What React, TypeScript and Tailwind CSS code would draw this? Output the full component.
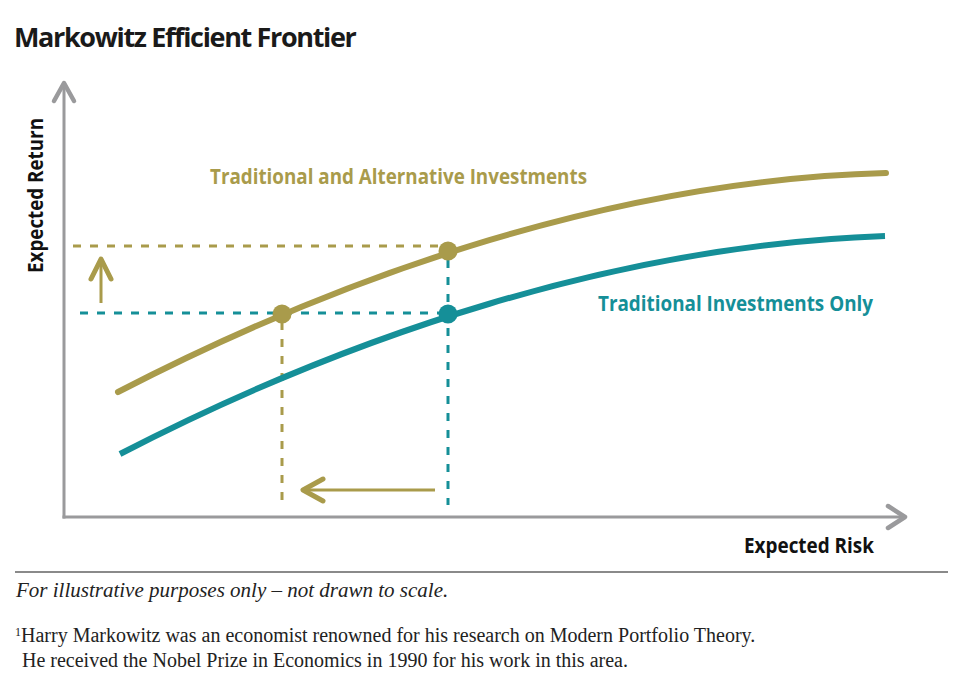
const GOLD = "#a99b4b";
const TEAL = "#158f98";
const AXIS = "#9a9a9c";

function FrontierChart() {
  const sans = "'Open Sans', 'Liberation Sans', sans-serif";
  return (
    <svg width="960" height="511" viewBox="0 54 960 511" className="block">
      {/* axes */}
      <line x1="64" y1="84" x2="64" y2="518.5" stroke={AXIS} strokeWidth="3" />
      <polyline points="54,101 64,83 74,101" fill="none" stroke={AXIS} strokeWidth="4.5" strokeLinecap="round" strokeLinejoin="round" />
      <line x1="62.5" y1="517" x2="904" y2="517" stroke={AXIS} strokeWidth="3" />
      <polyline points="888,506 905,517 888,528" fill="none" stroke={AXIS} strokeWidth="4.5" strokeLinecap="round" strokeLinejoin="round" />

      {/* guide lines */}
      <line x1="73" y1="246" x2="448" y2="246" stroke={GOLD} strokeWidth="3" strokeDasharray="8 9" />
      <line x1="80" y1="313" x2="448" y2="313" stroke={TEAL} strokeWidth="3" strokeDasharray="8 9" />
      <line x1="282" y1="322" x2="282" y2="505" stroke={GOLD} strokeWidth="3" strokeDasharray="8 9" />
      <line x1="448" y1="260" x2="448" y2="505" stroke={TEAL} strokeWidth="3" strokeDasharray="8 9" />

      {/* shift arrows */}
      <line x1="101" y1="303" x2="101" y2="260" stroke={GOLD} strokeWidth="3" />
      <polyline points="91,279 101,259 111,279" fill="none" stroke={GOLD} strokeWidth="5" strokeLinecap="round" strokeLinejoin="round" />
      <line x1="435" y1="490" x2="304" y2="490" stroke={GOLD} strokeWidth="3" />
      <polyline points="323,479 303,490 323,501" fill="none" stroke={GOLD} strokeWidth="5" strokeLinecap="round" strokeLinejoin="round" />

      {/* frontiers */}
      <path d="M118 392 C 350 272, 620 180, 886 173" fill="none" stroke={GOLD} strokeWidth="6" strokeLinecap="round" />
      <path d="M120 454 C 350 335, 620 245, 885 236" fill="none" stroke={TEAL} strokeWidth="6" />

      <circle cx="282" cy="314" r="9.5" fill={GOLD} />
      <circle cx="448" cy="251" r="9.5" fill={GOLD} />
      <circle cx="448" cy="314" r="9.5" fill={TEAL} />

      {/* labels */}
      <text x="210" y="184" fill={GOLD} fontFamily={sans} fontWeight="700" fontSize="21" textLength="377" lengthAdjust="spacingAndGlyphs">
        Traditional and Alternative Investments
      </text>
      <text x="598" y="311" fill={TEAL} fontFamily={sans} fontWeight="700" fontSize="21" textLength="275" lengthAdjust="spacingAndGlyphs">
        Traditional Investments Only
      </text>
      <text x="744" y="553" fill="#111" fontFamily={sans} fontWeight="700" fontSize="21" textLength="130" lengthAdjust="spacingAndGlyphs">
        Expected Risk
      </text>
      <text x="0" y="0" transform="translate(43 273) rotate(-90)" fill="#111" fontFamily={sans} fontWeight="700" fontSize="21" textLength="155" lengthAdjust="spacingAndGlyphs">
        Expected Return
      </text>
    </svg>
  );
}

export default function App() {
  return (
    <div className="w-[960px] h-[675px] bg-white overflow-hidden flex flex-col text-[#1a1a1a]">
      <h1 className="ml-[14px] mt-[19px] text-[27px] leading-[35px] font-bold tracking-[-1.35px] font-['Open_Sans','Liberation_Sans',sans-serif]">
        Markowitz Efficient Frontier
      </h1>

      <FrontierChart />

      <div className="ml-[15px] mt-[6px] w-[933px] h-[2px] bg-[#8a8a8a]" />

      <div className="font-['Liberation_Serif','Times_New_Roman',serif] text-[#222]">
        <p className="ml-[16px] mt-[5px] italic text-[21px] leading-[24px]">
          For illustrative purposes only – not drawn to scale.
        </p>
        <p className="ml-[15px] mt-[21px] text-[20px] leading-[25px]">
          <span className="relative top-[-6px] text-[12px] leading-none">1</span>Harry Markowitz was an economist renowned for his research on Modern Portfolio Theory.
          <br />
          <span className="ml-[7px]">He received the Nobel Prize in Economics in 1990 for his work in this area.</span>
        </p>
      </div>
    </div>
  );
}
